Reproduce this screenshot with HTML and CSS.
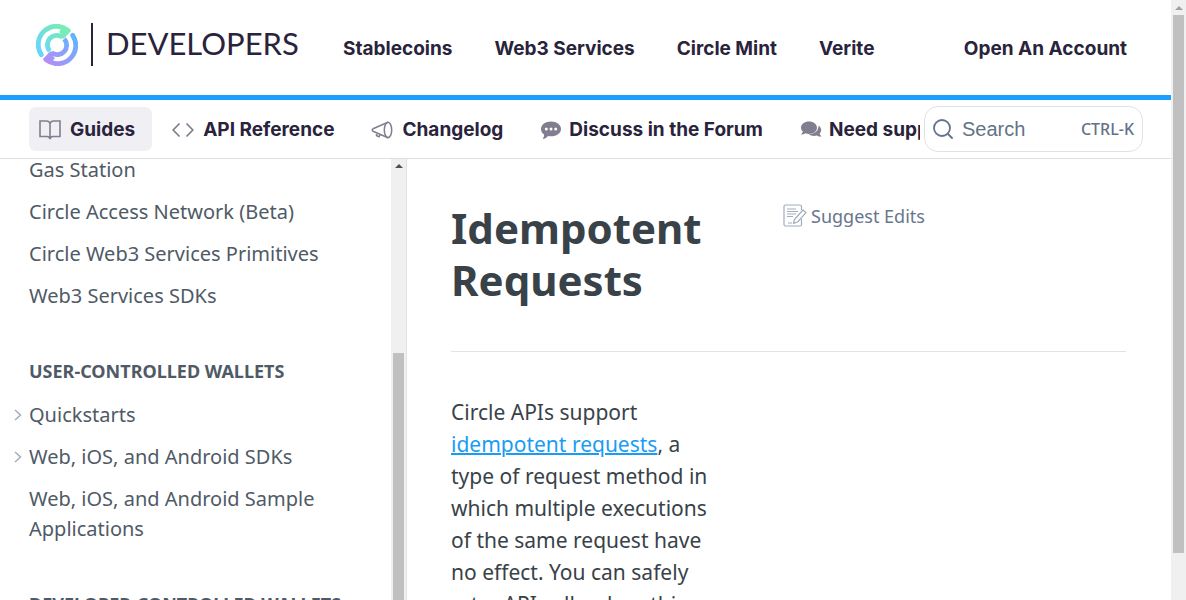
FILE: index.html
```html
<!DOCTYPE html>
<html lang="en">
<head>
<meta charset="utf-8">
<meta name="viewport" content="width=device-width, initial-scale=1">
<title>Idempotent Requests</title>
<link rel="stylesheet" href="styles.css">
</head>
<body>
<div class="window">
  <div class="page">
    <header class="topbar">
      <a class="logo" href="#">
        <svg class="logo-mark" viewBox="0 0 42 42" fill="none" aria-hidden="true">
          <defs>
            <linearGradient id="green" x1="32" y1="6" x2="6" y2="30" gradientUnits="userSpaceOnUse"><stop stop-color="#7aeeb0"/><stop offset="1" stop-color="#68d5fa"/></linearGradient>
            <linearGradient id="violet" x1="12" y1="38" x2="38" y2="12" gradientUnits="userSpaceOnUse"><stop stop-color="#b090f5"/><stop offset="1" stop-color="#62b4fd"/></linearGradient>
          </defs>
          <g stroke="url(#green)">
            <path stroke-width="4.800" stroke-linecap="round" d="M5.300 30.700A18.300 18.300 0 0 1 32 6.300"/>
            <path stroke-width="4.800" d="M13.800 27.200A9.500 9.500 0 0 1 26.500 13.200"/>
            <path fill="url(#green)" stroke-width="1" stroke-linejoin="round" d="m26 4 8.500 3-6.800 7.200-5-1.500 3-3.500-2-1Z"/>
          </g>
          <g stroke="url(#violet)">
            <path stroke-width="4.800" stroke-linecap="round" d="M36.700 11.300A18.300 18.300 0 0 1 10 35.700"/>
            <path stroke-width="4.800" d="M28.200 14.800A9.500 9.500 0 0 1 15.500 28.800"/>
            <path fill="url(#violet)" stroke-width="1" stroke-linejoin="round" d="m16 38-8.500-3 6.800-7.200 5 1.500-3 3.500 2 1Z"/>
          </g>
        </svg>
        <span class="logo-rule"></span>
        <span class="logo-word">DEVELOPERS</span>
      </a>
      <nav class="topnav" aria-label="Products">
        <a href="#">Stablecoins</a>
        <a href="#">Web3 Services</a>
        <a href="#">Circle Mint</a>
        <a href="#">Verite</a>
      </nav>
      <a class="account" href="#">Open An Account</a>
    </header>

    <div class="subbar">
      <nav class="tabs" aria-label="Documentation">
        <a class="tab active" href="#">
          <svg class="icon" viewBox="0 0 22 22" fill="none" stroke="currentColor" stroke-width="1.6" aria-hidden="true"><path d="M11 4.500C10.500 3 9.500 2 7.500 2H1v15.500h7c1.700 0 2.700.8 3 2.500.3-1.700 1.300-2.500 3-2.500h7V2h-6.500c-2 0-3 1-3.500 2.500ZM11 4.500V20"/></svg>Guides</a>
        <a class="tab" href="#">
          <svg class="icon" viewBox="0 0 22 22" fill="none" stroke="currentColor" stroke-width="1.700" aria-hidden="true"><path d="M7.500 4.500 1.200 11l6.300 6.500M14.500 4.500l6.300 6.500-6.300 6.500"/></svg>API Reference</a>
        <a class="tab" href="#">
          <svg class="icon" viewBox="0 0 22 22" fill="none" stroke="currentColor" stroke-width="1.500" stroke-linejoin="round" aria-hidden="true"><ellipse cx="17" cy="11" rx="3.700" ry="7.700"/><path d="M17 3.300 2 9.800Q.500 11 2 12.300l15 6.400M5.500 13.800v2.700l2.500 1.300 1.300-2.300"/></svg>Changelog</a>
        <a class="tab chat" href="#">
          <svg class="icon" viewBox="0 0 22 22" fill="currentColor" aria-hidden="true"><path fill-rule="evenodd" d="M11 2.500c5.500 0 10 3.200 10 7.400s-4.500 7.400-10 7.400c-1 0-2-.1-2.900-.3-1.300 1.600-3 2.700-5.300 3 .9-1.400 1.300-2.800 1.300-4.400C2.200 14.200 1 12.200 1 9.900c0-4.200 4.500-7.400 10-7.400ZM6.300 8.500a1.500 1.500 0 1 0 0 3 1.500 1.500 0 0 0 0-3Zm4.700 0a1.500 1.500 0 1 0 0 3 1.500 1.500 0 0 0 0-3Zm4.700 0a1.500 1.500 0 1 0 0 3 1.500 1.500 0 0 0 0-3Z"/></svg>Discuss in the Forum</a>
        <a class="tab chat" href="#">
          <svg class="icon" viewBox="0 0 22 22" fill="currentColor" aria-hidden="true"><path d="M9 2.500c4.500 0 8 2.700 8 6.200s-3.500 6.200-8 6.200c-1.300 0-2.500-.2-3.500-.6-1.300.9-2.700 1.300-4.500 1.200 1-.9 1.600-1.900 1.900-3C1.700 11.500 1 10.200 1 8.700c0-3.500 3.500-6.200 8-6.200Z"/><path d="M18.500 6.800c1.700 1 2.700 2.500 2.700 4.300 0 1.300-.6 2.500-1.600 3.500.3 1.100.9 2.100 1.900 3-1.800.1-3.200-.3-4.500-1.200-3 1-6.200.4-8.200-1.200 5.500.2 9.900-3.200 9.700-8.400Z"/></svg>Need support?</a>
      </nav>
      <button class="search" type="button">
        <svg class="search-icon" viewBox="0 0 20 20" fill="none" stroke="currentColor" stroke-width="1.800" stroke-linecap="round" aria-hidden="true"><circle cx="9" cy="9" r="8"/><path d="m15 15 4 4"/></svg>
        <span class="search-label">Search</span>
        <kbd class="shortcut">CTRL-K</kbd>
      </button>
    </div>

    <div class="body">
      <aside class="sidebar">
        <nav class="menu" aria-label="Guides">
          <ul>
            <li><a href="#">Gas Station</a></li>
            <li><a href="#">Circle Access Network (Beta)</a></li>
            <li><a href="#">Circle Web3 Services Primitives</a></li>
            <li><a href="#">Web3 Services SDKs</a></li>
          </ul>
          <h2>USER-CONTROLLED WALLETS</h2>
          <ul>
            <li class="parent"><svg class="chevron" viewBox="0 0 8 12" fill="none" stroke="currentColor" stroke-width="1.500" aria-hidden="true"><path d="m1 1 5.500 5L1 11"/></svg><a href="#">Quickstarts</a></li>
            <li class="parent"><svg class="chevron" viewBox="0 0 8 12" fill="none" stroke="currentColor" stroke-width="1.500" aria-hidden="true"><path d="m1 1 5.500 5L1 11"/></svg><a href="#">Web, iOS, and Android SDKs</a></li>
            <li><a href="#">Web, iOS, and Android Sample Applications</a></li>
          </ul>
          <h2>DEVELOPER-CONTROLLED WALLETS</h2>
        </nav>
        <div class="scrollbar side-scroll"><span class="arrow"></span><span class="thumb"></span></div>
      </aside>
      <main class="content">
        <div class="heading">
          <h1>Idempotent Requests</h1>
          <a class="suggest" href="#">
            <svg class="edit-icon" viewBox="0 0 24 24" fill="none" stroke="currentColor" stroke-width="1.200" stroke-linejoin="round" aria-hidden="true"><path d="M18.500 6V2.500Q18.500 1 17 1H2.500Q1 1 1 2.500v18Q1 22 2.500 22H17q1.500 0 1.500-1.500V15M4 5h9M4 7.500h11M4 10h9M4 12.500h6M5 19h4M11.500 15.500 20 6l3 2.700-8.500 9.300-4 1.500 1-4Z"/></svg>Suggest Edits</a>
        </div>
        <p class="prose">Circle APIs support <a href="#">idempotent requests</a>, a type of request method in which multiple executions of the same request have no effect. You can safely retry API calls when things go wrong.</p>
      </main>
    </div>
  </div>
  <div class="scrollbar page-scroll"><span class="arrow"></span><span class="thumb"></span></div>
</div>
</body>
</html>
```
FILE: styles.css
```css
* { box-sizing: border-box; }
body { margin: 0; font-family: "Noto Sans", sans-serif; background: #fff; color: #384248; }
a { color: inherit; text-decoration: none; }
ul { list-style: none; margin: 0; padding: 0; }

.window { display: flex; height: 100vh; overflow: hidden; }
.page { flex: 1; min-width: 0; display: flex; flex-direction: column; }

.topbar {
  flex: none; display: flex; align-items: center; height: 100px;
  padding: 2px 44px 0 36px; border-bottom: 5px solid #1aa1ff;
  font: 700 19px/24px Inter, sans-serif; color: #29233b;
}
.logo { display: flex; align-items: center; width: 307px; padding-bottom: 8px; }
.logo-mark { width: 42px; height: 42px; }
.logo-rule { width: 2px; height: 43px; margin: 0 13px; background: #29233b; }
.logo-word { padding-bottom: 3px; font: 400 31px/40px Lato, sans-serif; }
.topnav { display: flex; gap: 42px; white-space: nowrap; }
.account { margin-left: auto; white-space: nowrap; }

.subbar {
  flex: none; display: flex; align-items: center; height: 59px;
  padding: 0 28px 0 29px; border-bottom: 1px solid #dfdfe1;
}
.tabs { flex: 1; min-width: 0; display: flex; gap: 10px; overflow: hidden; }
.tab {
  flex: none; display: flex; align-items: center; gap: 9px; height: 44px;
  padding: 2px 17px 0 10px; border-radius: 7px;
  font: 700 19px/24px Inter, sans-serif; color: #29233b; white-space: nowrap;
}
.active { background: #f0eff4; }
.chat { gap: 7px; }
.icon { width: 22px; height: 22px; color: #827d8f; }
.search {
  flex: none; display: flex; align-items: center; gap: 9px; width: 219px; height: 46px;
  margin-left: 4px; padding: 0 8px; border: 1px solid #e0e1e3; border-radius: 14px;
  background: #fff; color: #637288; font: 20px/24px "Liberation Sans", sans-serif;
}
.search-icon { width: 20px; height: 20px; }
.shortcut { margin-left: auto; font: 500 16px/24px "Noto Sans", sans-serif; }

.body { flex: 1; min-height: 0; display: flex; }
.sidebar { flex: none; display: flex; width: 407px; border-right: 1px solid #e2e2e4; overflow: hidden; }
.menu { flex: 1; min-width: 0; margin-top: -4px; padding: 0 60px 0 29px; color: #4f5a66; font-size: 20px; line-height: 30px; }
.menu li { padding-bottom: 12px; }
.menu h2 { margin: 0; padding: 33px 0 14px; font-size: 18px; line-height: 30px; font-weight: 700; white-space: nowrap; }
.parent { display: flex; align-items: center; margin-left: -15px; }
.chevron { width: 8px; height: 12px; margin-right: 7px; color: #a7adb3; }

.scrollbar { flex: none; display: flex; flex-direction: column; align-items: center; width: 15px; background: #f0f0f0; }
.arrow { border: 4px solid transparent; border-top: 0; border-bottom-color: #505050; }
.thumb { width: 11px; background: #c0c0c0; }
.side-scroll { padding-top: 5px; }
.side-scroll .thumb { flex: 1; margin-top: 185px; }
.page-scroll { padding-top: 6px; }
.page-scroll .arrow { border-bottom-color: #a0a0a0; }
.page-scroll .thumb { height: calc(90vh - 2px); margin-top: 5px; }

.content { flex: 1; min-width: 0; padding: 43px 45px 0 44px; overflow: hidden; }
.heading { display: grid; grid-template-columns: 260px 1fr; gap: 72px; padding-bottom: 45px; border-bottom: 1px solid #e2e3e4; }
h1 { margin: 0; font-size: 42px; line-height: 52px; font-weight: 700; }
.suggest { display: flex; align-items: center; gap: 4px; height: 28px; color: #67758d; font-size: 18px; line-height: 28px; }
.edit-icon { width: 24px; height: 24px; color: #a2adbd; }
.prose { width: 264px; margin: 44px 0 0; font-size: 21px; line-height: 32px; }
.prose a { color: #1a9cf5; text-decoration: underline; text-decoration-thickness: 2px; }
```
